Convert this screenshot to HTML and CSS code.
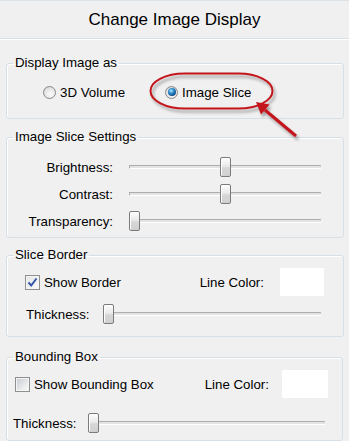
FILE: index.html
```html
<!DOCTYPE html>
<html lang="en">
<head>
<meta charset="UTF-8">
<title>Change Image Display</title>
<link rel="stylesheet" href="styles.css">
</head>
<body>
<div class="header">Change Image Display</div>

<fieldset class="group group-display">
    <legend>Display Image as</legend>
    <div class="radio-row">
        <label class="option"><span class="radio"></span>3D Volume</label>
        <label class="option"><span class="radio checked"></span>Image Slice</label>
    </div>
</fieldset>

<fieldset class="group group-slice">
    <legend>Image Slice Settings</legend>
    <div class="slider-list">
        <div class="slider-row">
            <span class="slider-label">Brightness:</span>
            <div class="slider"><span class="track"></span><span class="thumb" style="--v:0.5"></span></div>
        </div>
        <div class="slider-row">
            <span class="slider-label">Contrast:</span>
            <div class="slider"><span class="track"></span><span class="thumb" style="--v:0.5"></span></div>
        </div>
        <div class="slider-row">
            <span class="slider-label">Transparency:</span>
            <div class="slider"><span class="track"></span><span class="thumb" style="--v:0"></span></div>
        </div>
    </div>
</fieldset>

<fieldset class="group group-border">
    <legend>Slice Border</legend>
    <div class="check-row">
        <label class="option"><span class="checkbox checked"><svg width="13" height="13" viewBox="0 0 13 13"><path d="M2.5 6.5 L5.2 9.5 L10.5 2.5" fill="none" stroke="#3556a6" stroke-width="2"/></svg></span>Show Border</label>
        <span class="color-label">Line Color:</span>
        <span class="color-box"></span>
    </div>
    <div class="thick-row">
        <span>Thickness:</span>
        <div class="slider"><span class="track"></span><span class="thumb" style="--v:0"></span></div>
    </div>
</fieldset>

<fieldset class="group group-box">
    <legend>Bounding Box</legend>
    <div class="check-row">
        <label class="option"><span class="checkbox"></span>Show Bounding Box</label>
        <span class="color-label">Line Color:</span>
        <span class="color-box"></span>
    </div>
    <div class="thick-row">
        <span>Thickness:</span>
        <div class="slider"><span class="track"></span><span class="thumb" style="--v:0"></span></div>
    </div>
</fieldset>

<!-- red callout drawn over the dialog -->
<svg class="callout" width="349" height="441" viewBox="0 0 349 441">
    <defs>
        <filter id="shade" x="-20%" y="-20%" width="140%" height="160%">
            <feDropShadow dx="2" dy="3" stdDeviation="1.6" flood-color="#000" flood-opacity="0.35"/>
        </filter>
    </defs>
    <g filter="url(#shade)">
        <rect x="150.5" y="73.5" width="122" height="35" rx="34" ry="17.5" fill="none" stroke="#c3151c" stroke-width="2"/>
        <line x1="296" y1="136" x2="265" y2="110" stroke="#c3151c" stroke-width="3"/>
        <polygon points="256,102 269.5,104.5 261,114.5" fill="#c3151c"/>
    </g>
</svg>
</body>
</html>
```
FILE: styles.css
```css
body, html {
    margin: 0;
    padding: 0;
    background-color: #f0f0f0;
    font-family: "Liberation Sans", Arial, sans-serif;
    font-size: 13.3px;
    color: #000;
}

body {
    position: relative;
    width: 349px;
    height: 441px;
    overflow: hidden;
}

.header {
    height: 37px;
    line-height: 37px;
    text-align: center;
    font-size: 17px;
    border-top: 1px solid #dbe3e9;
    border-bottom: 1px solid #d5dfe5;
    box-shadow: 0 1px 0 #fff;
}

.group {
    margin: 0 5px 0 6px;
    padding: 0;
    border: 1px solid #d5dfe5;
    border-radius: 3px;
    box-shadow: inset 1px 1px 0 #fff;
    min-width: 0;
}

.group legend {
    margin-left: 6px;
    padding: 0 2px;
    line-height: 16px;
}

.group-display { margin-top: 16px; }
.group-slice { margin-top: 10px; }
.group-border { margin-top: 9px; }
.group-box { margin-top: 12px; margin-right: 6px; }

/* radios */
.radio-row {
    display: flex;
    gap: 40px;
    height: 16px;
    padding: 13px 0 18px 36px;
}

.option {
    display: flex;
    align-items: center;
    gap: 4px;
}

.radio {
    position: relative;
    width: 11px;
    height: 11px;
    border: 1px solid #8a8a8a;
    border-radius: 50%;
    background: radial-gradient(circle at 60% 65%, #fbfbfb 0, #e6e6e6 55%, #c9c9c9 100%);
}

.radio.checked::after {
    content: "";
    position: absolute;
    left: 1.5px;
    top: 1.5px;
    width: 8px;
    height: 8px;
    border-radius: 50%;
    background: radial-gradient(circle at 40% 35%, #b8ecff 0, #2f8fd0 35%, #10477f 75%, #0a2a55 100%);
}

/* sliders */
.slider-list {
    padding: 12px 22px 6px 21px;
}

.slider-row {
    display: flex;
    align-items: center;
    height: 20px;
}

.slider-row + .slider-row {
    margin-top: 7px;
}

.slider-label {
    width: 85px;
    text-align: right;
    margin-right: 16px;
}

.slider {
    position: relative;
    flex: 1;
    height: 20px;
}

.track {
    position: absolute;
    left: 0;
    right: 0;
    top: 8px;
    height: 2px;
    border-top: 1px solid #adadad;
    border-left: 1px solid #adadad;
    border-bottom: 1px solid #fff;
    background: #e2e4e4;
}

.thumb {
    position: absolute;
    top: 0;
    left: calc(var(--v) * (100% - 11px));
    width: 9px;
    height: 18px;
    border: 1px solid #7b7b7b;
    border-radius: 2px;
    background: linear-gradient(#fdfdfd, #eaeaea 45%, #d6d6d6 55%, #d0d0d0);
    box-shadow: inset 1px 1px 0 #fff;
}

/* checkbox rows */
.check-row {
    display: flex;
    align-items: center;
    height: 28px;
}

.checkbox {
    display: flex;
    align-items: center;
    justify-content: center;
    width: 13px;
    height: 13px;
    border: 1px solid #8e8f8f;
    background: linear-gradient(135deg, #c4c9cf, #eeeff0 70%, #f8f8f8);
    box-shadow: inset 0 0 0 1px #f4f4f4;
}

.checkbox.checked {
    background: linear-gradient(135deg, #e3e5e8, #fafafa);
}

.color-label {
    margin-left: auto;
}

.color-box {
    height: 28px;
    background: #fff;
}

.thick-row {
    display: flex;
    align-items: center;
    height: 20px;
}

.group-border .check-row {
    padding: 5px 19px 0 18px;
}

.group-border .color-label { margin-right: 16px; }
.group-border .color-box { width: 44px; }

.group-border .thick-row {
    margin-top: 8px;
    padding: 0 22px 12px 19px;
}

.group-border .thick-row .slider { margin-left: 13px; }

.group-box .check-row {
    padding: 5px 14px 0 8px;
}

.group-box .color-label { margin-right: 13px; }
.group-box .color-box { width: 46px; }

.group-box .thick-row {
    margin-top: 15px;
    padding: 0 17px 7px 6px;
}

.group-box .thick-row .slider { margin-left: 11px; }

.callout {
    position: absolute;
    left: 0;
    top: 0;
    pointer-events: none;
}
```
